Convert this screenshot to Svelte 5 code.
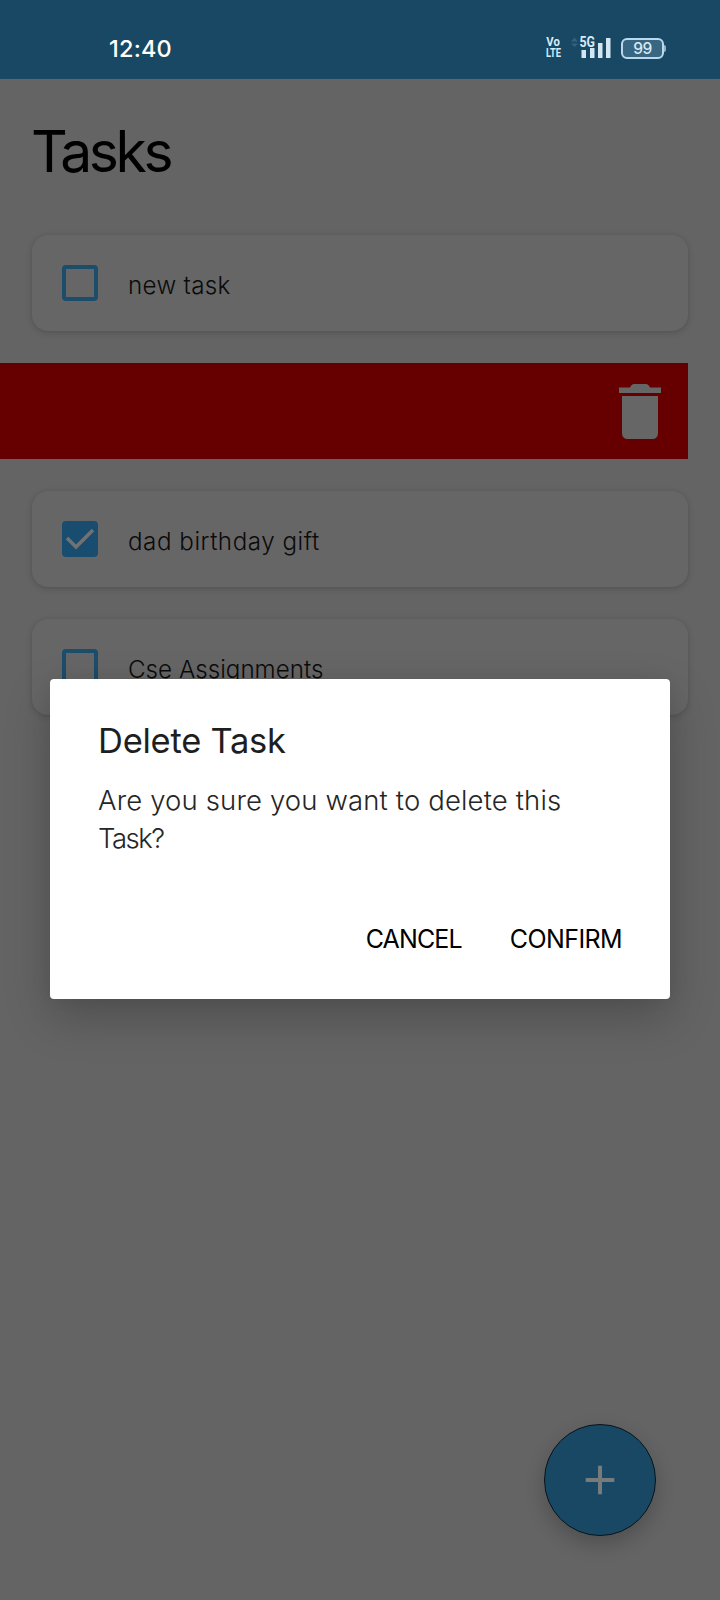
<script>
  const tasks = [
    { label: 'new task', kind: 'new' },
    { swiped: true },
    { label: 'dad birthday gift', done: true, kind: 'dad' },
    { label: 'Cse Assignments', kind: 'cse' }
  ];
  const spacing = { new: 0.3, dad: 0.52, cse: 0 };
</script>

<div class="screen">
  <header class="status">
    <span class="clock">12:40</span>
    <div class="indicators">
      <svg class="volte" width="16" height="22" viewBox="0 0 16 22" fill="#d8eaf6">
        <text x="0.300" y="10.200" textLength="13.500" lengthAdjust="spacingAndGlyphs">Vo</text>
        <text x="0" y="21.200" textLength="15" lengthAdjust="spacingAndGlyphs">LTE</text>
      </svg>
      <svg class="signal" width="42" height="24" viewBox="0 0 42 24">
        <path d="M1 7.500 4.500 3.500 8 7.500ZM1 9.500 4.500 13 8 9.500Z" fill="#33627f" />
        <path d="M11.500 16h4.500v8h-4.500zM20 14h4.500v10h-4.500zM28 9h4.500v15h-4.500zM36 4h4.500v20h-4.500z" fill="#d3e6f3" />
        <text x="9.500" y="13" textLength="15.500" lengthAdjust="spacingAndGlyphs">5G</text>
      </svg>
      <div class="battery"><span>99</span></div>
      <i class="nub"></i>
    </div>
  </header>

  <main>
    <h1>Tasks</h1>
    <div class="list">
      {#each tasks as task}
        {#if task.swiped}
          <div class="swipe">
            <svg width="42" height="56" viewBox="0 0 42 56" fill="#666">
              <path d="M0 3.500h11q1.500-3.500 4-3.500h12q2.500 0 4 3.500h11v5.500H0z" />
              <path d="M3 12h36v37.500a5.500 5.500 0 0 1-5.500 5.500h-25A5.500 5.500 0 0 1 3 49.500z" />
            </svg>
          </div>
        {:else}
          <div class="card">
            <div class="box" class:done={task.done}>
              {#if task.done}
                <svg width="36" height="36" viewBox="0 0 36 36">
                  <path d="M5 17 14 26 31 9" fill="none" stroke="#707274" stroke-width="3.600" />
                </svg>
              {/if}
            </div>
            <span class="label" style="letter-spacing: {spacing[task.kind]}px">{task.label}</span>
          </div>
        {/if}
      {/each}
    </div>
  </main>

  <button class="fab" aria-label="Add task">
    <svg width="30" height="30" viewBox="0 0 30 30"><path d="M15 .7v28.600M.7 15h28.600" stroke="#777b7e" stroke-width="4" /></svg>
  </button>

  <div class="dialog" role="dialog" aria-labelledby="title">
    <h2 id="title">Delete Task</h2>
    <p>Are you sure you want to delete this <span class="tight">Task?</span></p>
    <div class="actions">
      <button class="cancel">CANCEL</button>
      <button class="confirm">CONFIRM</button>
    </div>
  </div>
</div>

<style>
  :global(body) { margin: 0; background: #646464; }
  .screen {
    position: relative;
    width: 720px;
    height: 1600px;
    overflow: hidden;
    background: #646464;
    font-family: Inter, Roboto, sans-serif;
    color: #000;
  }
  .status {
    box-sizing: border-box;
    height: 79px;
    padding: 36px 54px 0 109px;
    display: flex;
    justify-content: space-between;
    align-items: flex-start;
    background: #184864;
  }
  .clock { font-size: 23.500px; line-height: 25px; font-weight: 500; letter-spacing: .2px; color: #fff; }
  .indicators { display: flex; align-items: flex-start; }
  .volte { display: block; overflow: visible; margin-right: 8px; font: 700 13px Roboto, sans-serif; }
  .signal {
    display: block;
    overflow: visible;
    margin: -2px 9px 0 0;
    font: 700 14px Roboto, sans-serif;
  }
  .signal text { fill: #d8eaf6; stroke: #184864; stroke-width: 2px; paint-order: stroke; }
  .battery {
    box-sizing: border-box;
    width: 43px;
    height: 21px;
    margin-top: 2px;
    border: 2px solid #b9d9ee;
    border-radius: 6px;
    background: #396680;
    font-size: 15.500px;
    font-weight: 500;
    line-height: 17px;
    letter-spacing: -.5px;
    text-align: center;
    color: #d8eaf6;
  }
  .nub { width: 2px; height: 7px; margin-top: 9px; background: #8fb3c9; border-radius: 0 2px 2px 0; }
  h1 {
    margin: 0;
    padding: 37px 0 0 31px;
    height: 119px;
    font-size: 57px;
    line-height: 72px;
    font-weight: 400;
    letter-spacing: -3.400px;
  }
  .list { display: flex; flex-direction: column; gap: 32px; }
  main { display: flex; flex-direction: column; }
  .card {
    box-sizing: border-box;
    height: 96px;
    margin: 0 32px;
    padding-left: 30px;
    display: flex;
    align-items: center;
    gap: 30px;
    border-radius: 16px;
    background: #666;
    box-shadow: 0 2px 7px rgba(0, 0, 0, .15), 0 0 3px rgba(0, 0, 0, .06);
  }
  .box { box-sizing: border-box; width: 36px; height: 36px; margin-bottom: 1px; border: 4px solid #1c4d6a; border-radius: 4px; }
  .box.done { border: 0; background: #184d70; }
  .box svg { display: block; }
  .label { padding-top: 5px; font-size: 24.200px; line-height: 30px; font-weight: 300; color: #0b0b0b; }
  .swipe {
    box-sizing: border-box;
    height: 96px;
    margin-right: 32px;
    padding: 21px 27px 0 0;
    display: flex;
    justify-content: flex-end;
    background: #660000;
  }
  .fab {
    position: absolute;
    box-sizing: border-box;
    left: 544px;
    top: 1424px;
    width: 112px;
    height: 112px;
    padding: 0;
    display: grid;
    place-items: center;
    border: 1px solid #08141c;
    border-radius: 50%;
    background: #184864;
    box-shadow: 0 8px 20px rgba(0, 0, 0, .22);
  }
  .dialog {
    position: absolute;
    box-sizing: border-box;
    left: 50px;
    top: 679px;
    width: 620px;
    height: 320px;
    padding: 40px 48px 0 48px;
    border-radius: 4px;
    background: #fff;
    box-shadow: 0 18px 46px rgba(0, 0, 0, .22), 0 0 16px rgba(0, 0, 0, .05);
  }
  h2 { margin: 0; font-size: 34.500px; line-height: 44px; font-weight: 400; letter-spacing: -.250px; color: #1e1e1e; }
  p { margin: 19px 0 0; font-size: 27.500px; line-height: 37.500px; font-weight: 300; letter-spacing: .140px; color: #262626; }
  .tight { letter-spacing: -1.500px; }
  .actions { display: flex; justify-content: flex-end; gap: 48px; margin-top: 66px; }
  .actions button {
    padding: 0;
    border: 0;
    background: none;
    font: 400 25px/32px Inter, Roboto, sans-serif;
    color: #000;
  }
  .actions .cancel { letter-spacing: -.850px; }
  .actions .confirm { letter-spacing: -.600px; }
</style>
